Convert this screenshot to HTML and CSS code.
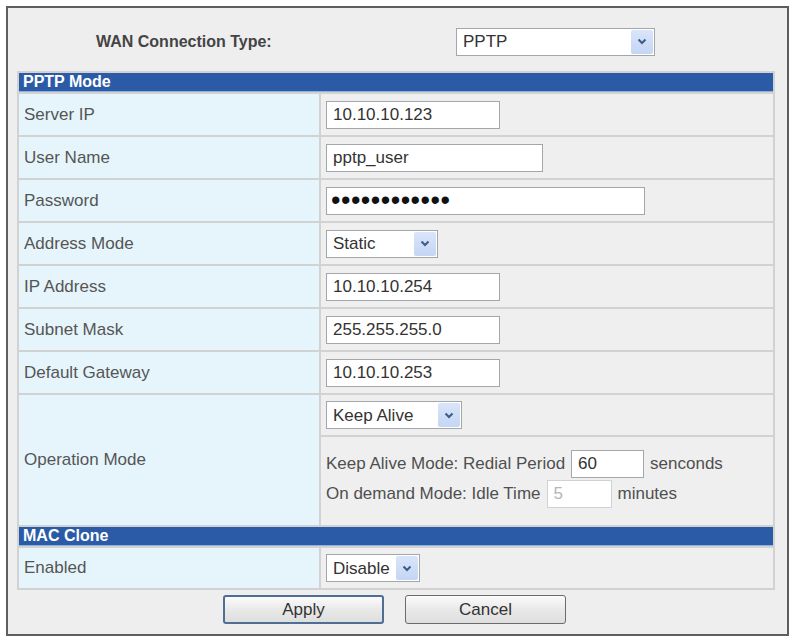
FILE: index.html
```html
<!DOCTYPE html>
<html lang="en">
<head>
    <meta charset="UTF-8">
    <meta name="viewport" content="width=device-width, initial-scale=1.0">
    <title>WAN Setup - PPTP</title>
    <link rel="stylesheet" href="styles.css">
</head>
<body>
    <form class="panel" id="wanForm">
        <div class="wan-type">
            <span class="wan-type-label">WAN Connection Type:</span>
            <span class="select select-wan">
                <select name="wanType">
                    <option>PPTP</option>
                    <option>PPPoE</option>
                    <option>DHCP</option>
                    <option>Static IP</option>
                </select>
                <span class="select-btn"><svg width="10" height="7" viewBox="0 0 10 7"><path d="M1.5 1.5 5 5 8.5 1.5" fill="none" stroke="#3d5a8c" stroke-width="2"/></svg></span>
            </span>
        </div>

        <table class="settings">
            <tr>
                <th colspan="2">PPTP Mode</th>
            </tr>
            <tr>
                <td class="label">Server IP</td>
                <td class="value"><input type="text" class="w-ip" value="10.10.10.123"></td>
            </tr>
            <tr>
                <td class="label">User Name</td>
                <td class="value"><input type="text" class="w-user" value="pptp_user"></td>
            </tr>
            <tr>
                <td class="label">Password</td>
                <td class="value"><input type="password" class="w-pass" value="secretpass12"></td>
            </tr>
            <tr>
                <td class="label">Address Mode</td>
                <td class="value">
                    <span class="select select-addr">
                        <select name="addrMode">
                            <option>Static</option>
                            <option>Dynamic</option>
                        </select>
                        <span class="select-btn"><svg width="10" height="7" viewBox="0 0 10 7"><path d="M1.5 1.5 5 5 8.5 1.5" fill="none" stroke="#3d5a8c" stroke-width="2"/></svg></span>
                    </span>
                </td>
            </tr>
            <tr>
                <td class="label">IP Address</td>
                <td class="value"><input type="text" class="w-ip" value="10.10.10.254"></td>
            </tr>
            <tr>
                <td class="label">Subnet Mask</td>
                <td class="value"><input type="text" class="w-ip" value="255.255.255.0"></td>
            </tr>
            <tr>
                <td class="label">Default Gateway</td>
                <td class="value"><input type="text" class="w-ip" value="10.10.10.253"></td>
            </tr>
            <tr class="op-top">
                <td class="label" rowspan="2">Operation Mode</td>
                <td class="value">
                    <span class="select select-op">
                        <select name="opMode">
                            <option>Keep Alive</option>
                            <option>On demand</option>
                            <option>Manual</option>
                        </select>
                        <span class="select-btn"><svg width="10" height="7" viewBox="0 0 10 7"><path d="M1.5 1.5 5 5 8.5 1.5" fill="none" stroke="#3d5a8c" stroke-width="2"/></svg></span>
                    </span>
                </td>
            </tr>
            <tr class="op-detail">
                <td class="value">
                    <div class="op-line">
                        Keep Alive Mode: Redial Period
                        <input type="text" class="w-redial" value="60">
                        senconds
                    </div>
                    <div class="op-line">
                        On demand Mode: Idle Time
                        <input type="text" class="w-idle" value="5" disabled>
                        minutes
                    </div>
                </td>
            </tr>
            <tr class="section-mac">
                <th colspan="2">MAC Clone</th>
            </tr>
            <tr class="row-mac">
                <td class="label">Enabled</td>
                <td class="value">
                    <span class="select select-mac">
                        <select name="macClone">
                            <option>Disable</option>
                            <option>Enable</option>
                        </select>
                        <span class="select-btn"><svg width="10" height="7" viewBox="0 0 10 7"><path d="M1.5 1.5 5 5 8.5 1.5" fill="none" stroke="#3d5a8c" stroke-width="2"/></svg></span>
                    </span>
                </td>
            </tr>
        </table>

        <div class="actions">
            <button type="submit" class="btn btn-default">Apply</button>
            <button type="button" class="btn">Cancel</button>
        </div>
    </form>
</body>
</html>
```

FILE: styles.css
```css
body {
    margin: 0;
    padding: 6px;
    background-color: #fff;
    font-family: "Liberation Sans", Arial, sans-serif;
    color: #4a4a4a;
}
.panel {
    box-sizing: border-box;
    width: 783px;
    height: 630px;
    margin: 0;
    padding: 0 12px 0 9px;
    border: 2px solid #5e5e5e;
    background-color: #eeeeee;
}

/* connection type line */
.wan-type {
    display: flex;
    align-items: center;
    height: 63px;
    padding-top: 4px;
    box-sizing: border-box;
}
.wan-type-label {
    margin-left: 79px;
    width: 180px;
    font-size: 16px;
    font-weight: bold;
    color: #444;
    white-space: nowrap;
}
.select-wan {
    margin-left: 180px;
}

/* settings table */
.settings {
    width: 758px;
    border-collapse: separate;
    border-spacing: 2px;
    background-color: #d2d2d2;
}
.settings th {
    height: 18px;
    padding: 0 0 0 4px;
    background-color: #2b5ba6;
    border-bottom: 1px solid #8fb1de;
    color: #fff;
    font-size: 16px;
    text-align: left;
    line-height: 18px;
}
.settings td {
    height: 41px;
    padding: 0 0 0 5px;
    vertical-align: middle;
    font-size: 17px;
}
.settings .label {
    width: 295px;
    background-color: #e6f5fc;
    color: #555;
}
.settings .value {
    background-color: #efefef;
}
.op-top td.value {
    height: 40px;
}
.op-detail td.value {
    height: 84px;
    padding-bottom: 4px;
    color: #4f4f4f;
}
.op-line {
    display: flex;
    align-items: center;
    gap: 6px;
    height: 30px;
    white-space: nowrap;
}
.row-mac td {
    height: 40px;
}

/* text inputs */
input[type="text"],
input[type="password"] {
    box-sizing: border-box;
    height: 28px;
    margin: 0;
    padding: 0 6px;
    border: 1px solid #a3a7ab;
    background-color: #fff;
    font-family: "Liberation Sans", Arial, sans-serif;
    font-size: 17px;
    color: #333;
    outline: none;
}
input[type="password"] {
    font-size: 27px;
    letter-spacing: 0.5px;
    color: #111;
    padding-left: 4px;
}
input:disabled {
    border-color: #cfd2d5;
    color: #b5b5b5;
}
.w-ip { width: 174px; }
.w-user { width: 217px; }
.w-pass { width: 319px; }
.w-redial { width: 73px; }
.w-idle { width: 65px; }

/* drop-down boxes */
.select {
    box-sizing: border-box;
    display: inline-flex;
    align-items: stretch;
    height: 28px;
    border: 1px solid #a3a7ab;
    background-color: #fff;
    vertical-align: middle;
}
.select select {
    flex: 1;
    min-width: 0;
    margin: 0;
    padding: 0 0 0 6px;
    border: none;
    background: transparent;
    font-family: "Liberation Sans", Arial, sans-serif;
    font-size: 17px;
    color: #333;
    appearance: none;
    -webkit-appearance: none;
    outline: none;
}
.select-btn {
    display: flex;
    align-items: center;
    justify-content: center;
    width: 22px;
    margin: 1px;
    background: linear-gradient(#d9e5f9, #c4d6f4);
    border-radius: 2px;
}
.select-wan { width: 199px; }
.select-addr { width: 112px; }
.select-op { width: 136px; }
.select-mac { width: 94px; }

/* buttons */
.actions {
    display: flex;
    justify-content: center;
    gap: 21px;
    padding-top: 5px;
    padding-right: 3px;
}
.btn {
    box-sizing: border-box;
    width: 161px;
    height: 29px;
    border: 1px solid #6b6b6b;
    border-radius: 3px;
    background: linear-gradient(#fbfbfb, #e9e9e9 50%, #dedede);
    font-family: "Liberation Sans", Arial, sans-serif;
    font-size: 17px;
    color: #333;
    cursor: pointer;
}
.btn-default {
    border: 2px solid #4e6f93;
}
.btn:hover {
    background: linear-gradient(#f2f8fd, #d8ecfa);
}
```
